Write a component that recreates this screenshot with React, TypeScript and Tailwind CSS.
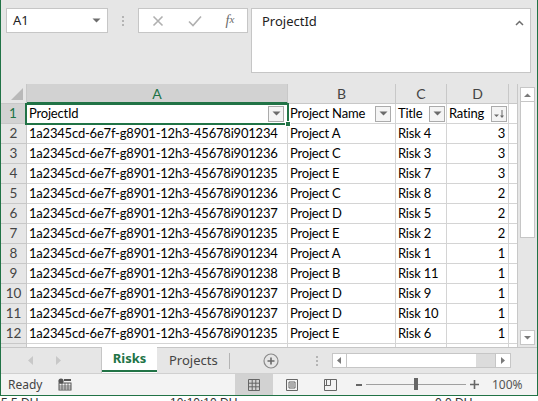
import React from "react";

const rows: [string, string, string, string][] = [
  ["1a2345cd-6e7f-g8901-12h3-45678i901234", "Project A", "Risk 4", "3"],
  ["1a2345cd-6e7f-g8901-12h3-45678i901236", "Project C", "Risk 3", "3"],
  ["1a2345cd-6e7f-g8901-12h3-45678i901235", "Project E", "Risk 7", "3"],
  ["1a2345cd-6e7f-g8901-12h3-45678i901236", "Project C", "Risk 8", "2"],
  ["1a2345cd-6e7f-g8901-12h3-45678i901237", "Project D", "Risk 5", "2"],
  ["1a2345cd-6e7f-g8901-12h3-45678i901235", "Project E", "Risk 2", "2"],
  ["1a2345cd-6e7f-g8901-12h3-45678i901234", "Project A", "Risk 1", "1"],
  ["1a2345cd-6e7f-g8901-12h3-45678i901238", "Project B", "Risk 11", "1"],
  ["1a2345cd-6e7f-g8901-12h3-45678i901237", "Project D", "Risk 9", "1"],
  ["1a2345cd-6e7f-g8901-12h3-45678i901237", "Project D", "Risk 10", "1"],
  ["1a2345cd-6e7f-g8901-12h3-45678i901235", "Project E", "Risk 6", "1"],
];

const cellFont = "font-['Lato','Liberation_Sans',sans-serif]";
const uiFont = "font-['Noto_Sans','Liberation_Sans',sans-serif]";

function FilterBtn({ sort = false }: { sort?: boolean }) {
  return (
    <div className="w-[16px] h-[16px] border border-[#ababab] bg-[#f4f4f4] flex items-center justify-center shrink-0">
      {sort ? (
        <svg width="12" height="10" viewBox="0 0 12 10">
          <path d="M1 5.5h5l-2.5 2.5z" fill="#6b6b6b" />
          <rect x="8.5" y="1" width="1" height="7" fill="#6b6b6b" />
          <path d="M7 6.5h4l-2 2.5z" fill="#6b6b6b" />
        </svg>
      ) : (
        <svg width="9" height="5" viewBox="0 0 9 5">
          <path d="M0.5 0.5h8l-4 4z" fill="#6b6b6b" />
        </svg>
      )}
    </div>
  );
}

function HeaderCell({ w, children, sel = false, last = false }: { w: string; children?: React.ReactNode; sel?: boolean; last?: boolean }) {
  return (
    <div
      className={`${w} h-full flex items-center justify-center shrink-0 ${last ? "" : "border-r border-[#c8c8c8]"} ${
        sel ? "bg-[#d2d2d2] text-[#217346] border-b-2 border-b-[#217346]" : "text-[#444] border-b border-b-[#c8c8c8]"
      }`}
    >
      {children}
    </div>
  );
}

export default function App() {
  return (
    <div className="w-[538px] h-[401px] overflow-hidden bg-white flex flex-col">
      <div className="h-[396px] shrink-0 flex flex-col border-l border-r border-b border-[#217346] bg-[#e6e6e6] relative">
        {/* Top formula area */}
        <div className={`h-[84px] shrink-0 flex items-start pt-[8px] pl-[5px] ${uiFont}`}>
          <div className="w-[102px] h-[25px] bg-white border border-[#c6c6c6] flex items-center pl-[6px] pr-[6px] text-[13px] text-[#222]">
            <span className="flex-1">A1</span>
            <svg width="9" height="5" viewBox="0 0 9 5">
              <path d="M0.5 0.5h8l-4 4z" fill="#6d6d6d" />
            </svg>
          </div>
          <div className="w-[30px] h-[25px] flex flex-col items-center justify-center gap-[2px]">
            <div className="w-[2px] h-[2px] bg-[#b4b4b4]" />
            <div className="w-[2px] h-[2px] bg-[#b4b4b4]" />
            <div className="w-[2px] h-[2px] bg-[#b4b4b4]" />
          </div>
          <div className="w-[110px] h-[25px] bg-white border border-[#c6c6c6] flex items-center">
            <div className="w-[38px] flex justify-center">
              <svg width="12" height="12" viewBox="0 0 12 12">
                <path d="M1.5 1.5l9 9M10.5 1.5l-9 9" stroke="#b0b0b0" strokeWidth="1.6" />
              </svg>
            </div>
            <div className="w-[36px] flex justify-center">
              <svg width="14" height="12" viewBox="0 0 14 12">
                <path d="M1 6.5l4 4 8-9" stroke="#b0b0b0" strokeWidth="1.6" fill="none" />
              </svg>
            </div>
            <div className="w-[34px] flex justify-center font-['Liberation_Serif',serif] italic text-[14px] text-[#6a6a6a] leading-none">
              f<span className="text-[11px]">x</span>
            </div>
          </div>
          <div className="ml-[3px] w-[280px] h-[65px] bg-white border border-[#c6c6c6] flex items-start justify-between pl-[10px] pr-[6px] pt-[2px]">
            <span className="text-[13px] text-[#222] leading-[20px]">ProjectId</span>
            <svg width="9" height="6" viewBox="0 0 9 6" className="mt-[9px]">
              <path d="M1 5l3.5-3.5L8 5" stroke="#6d6d6d" strokeWidth="1.5" fill="none" />
            </svg>
          </div>
        </div>

        {/* Grid area */}
        <div className={`h-[263px] shrink-0 flex overflow-hidden ${cellFont}`}>
          <div className="flex-1 flex flex-col overflow-hidden">
            {/* Column header */}
            <div className="h-[20px] shrink-0 flex bg-[#e6e6e6] text-[14px]">
              <div className="w-[26px] h-full shrink-0 border-r border-b border-[#c8c8c8] flex items-end justify-end pr-[3px] pb-[3px]">
                <svg width="12" height="12" viewBox="0 0 12 12">
                  <path d="M12 0v12H0z" fill="#b9b9b9" />
                </svg>
              </div>
              <HeaderCell w="w-[261px]" sel>A</HeaderCell>
              <HeaderCell w="w-[108px]">B</HeaderCell>
              <HeaderCell w="w-[51px]">C</HeaderCell>
              <HeaderCell w="w-[62px]">D</HeaderCell>
              <HeaderCell w="w-[8px]" last />
            </div>
            {/* Row 1 */}
            <div className="h-[20px] shrink-0 flex text-[13px] tracking-[-0.2px] text-black bg-white relative">
              <div className="w-[26px] h-full shrink-0 bg-[#d2d2d2] border-r-2 border-r-[#217346] border-b border-b-[#c8c8c8] flex items-center justify-center text-[#217346] text-[13.5px] tracking-normal">
                1
              </div>
              <div className="w-[261px] h-full shrink-0 border-r border-b border-[#d4d4d4] flex items-center pl-[2px] pr-[3px]">
                <span className="flex-1">ProjectId</span>
                <FilterBtn />
              </div>
              <div className="w-[108px] h-full shrink-0 border-r border-b border-[#d4d4d4] flex items-center pl-[2px] pr-[4px]">
                <span className="flex-1 whitespace-nowrap">Project Name</span>
                <FilterBtn />
              </div>
              <div className="w-[51px] h-full shrink-0 border-r border-b border-[#d4d4d4] flex items-center pl-[2px] pr-[1px]">
                <span className="flex-1">Title</span>
                <FilterBtn />
              </div>
              <div className="w-[62px] h-full shrink-0 border-r border-b border-[#d4d4d4] flex items-center pl-[2px] pr-[1px]">
                <span className="flex-1">Rating</span>
                <FilterBtn sort />
              </div>
              <div className="w-[8px] h-full shrink-0 border-b border-[#d4d4d4]" />
              {/* selection */}
              <div className="absolute left-[24px] top-[-1px] w-[264px] h-[22px] border-2 border-[#217346] pointer-events-none" />
              <div className="absolute left-[284px] top-[17px] w-[6px] h-[6px] bg-[#217346] border border-white pointer-events-none" />
            </div>
            {rows.map((r, i) => (
              <div key={i} className="h-[20px] shrink-0 flex text-[13px] tracking-[-0.2px] text-black bg-white">
                <div className="w-[26px] h-full shrink-0 bg-[#e6e6e6] border-r border-b border-[#c8c8c8] flex items-center justify-center text-[#444] text-[13.5px] tracking-normal">
                  {i + 2}
                </div>
                <div className="w-[261px] h-full shrink-0 border-r border-b border-[#d4d4d4] flex items-center pl-[2px] whitespace-nowrap overflow-hidden">
                  {r[0]}
                </div>
                <div className="w-[108px] h-full shrink-0 border-r border-b border-[#d4d4d4] flex items-center pl-[2px] whitespace-nowrap">
                  {r[1]}
                </div>
                <div className="w-[51px] h-full shrink-0 border-r border-b border-[#d4d4d4] flex items-center pl-[2px] whitespace-nowrap">
                  {r[2]}
                </div>
                <div className="w-[62px] h-full shrink-0 border-r border-b border-[#d4d4d4] flex items-center justify-end pr-[3px]">
                  {r[3]}
                </div>
                <div className="w-[8px] h-full shrink-0 border-b border-[#d4d4d4]" />
              </div>
            ))}
            <div className="h-[3px] shrink-0 flex">
              <div className="w-[26px] h-full shrink-0 bg-[#e6e6e6] border-r border-[#c8c8c8]" />
              <div className="w-[261px] h-full shrink-0 border-r border-[#d4d4d4] bg-white" />
              <div className="w-[108px] h-full shrink-0 border-r border-[#d4d4d4] bg-white" />
              <div className="w-[51px] h-full shrink-0 border-r border-[#d4d4d4] bg-white" />
              <div className="w-[62px] h-full shrink-0 border-r border-[#d4d4d4] bg-white" />
              <div className="w-[8px] h-full shrink-0 bg-white" />
            </div>
          </div>
          {/* Vertical scrollbar */}
          <div className="w-[20px] shrink-0 border-l border-[#c8c8c8] bg-[#e6e6e6] flex flex-col items-center pt-[3px] pb-[2px]">
            <div className="w-[15px] h-[15px] bg-white border border-[#c6c6c6] flex items-center justify-center">
              <svg width="7" height="4" viewBox="0 0 7 4">
                <path d="M0 4l3.5-3.5L7 4z" fill="#7a7a7a" />
              </svg>
            </div>
            <div className="w-[15px] h-[136px] bg-white border border-[#c6c6c6] border-t-0" />
            <div className="flex-1" />
            <div className="w-[15px] h-[15px] bg-white border border-[#c6c6c6] flex items-center justify-center">
              <svg width="7" height="4" viewBox="0 0 7 4">
                <path d="M0 0h7L3.5 3.5z" fill="#7a7a7a" />
              </svg>
            </div>
          </div>
        </div>

        {/* Tab bar */}
        <div className={`h-[26px] shrink-0 flex items-stretch bg-[#e6e6e6] ${uiFont}`}>
          <div className="w-[100px] border-t border-[#c6c6c6] flex items-center">
            <svg width="6" height="9" viewBox="0 0 6 9" className="ml-[27px]">
              <path d="M5 0v9L0 4.5z" fill="#c8c8c8" />
            </svg>
            <svg width="6" height="9" viewBox="0 0 6 9" className="ml-[22px]">
              <path d="M0 0v9l5-4.5z" fill="#c8c8c8" />
            </svg>
          </div>
          <div className="w-[56px] bg-white border-l border-[#c6c6c6] flex flex-col">
            <div className="flex-1 flex items-center justify-center text-[#217346] font-bold text-[13px]">Risks</div>
            <div className="h-[2px] bg-[#217346] mb-[1px]" />
          </div>
          <div className="flex-1 border-t border-[#c6c6c6] flex items-center">
            <span className="ml-[12px] text-[13px] text-[#444]">Projects</span>
            <div className="ml-[11px] w-[1px] h-[16px] bg-[#b4b4b4]" />
            <svg width="16" height="16" viewBox="0 0 16 16" className="ml-[33px]">
              <circle cx="8" cy="8" r="7" fill="none" stroke="#8a8a8a" strokeWidth="1.2" />
              <path d="M8 4.5v7M4.5 8h7" stroke="#6a6a6a" strokeWidth="1.6" />
            </svg>
            <div className="ml-[37px] flex flex-col gap-[2px]">
              <div className="w-[2px] h-[2px] bg-[#b4b4b4]" />
              <div className="w-[2px] h-[2px] bg-[#b4b4b4]" />
              <div className="w-[2px] h-[2px] bg-[#b4b4b4]" />
            </div>
            <div className="ml-[14px] w-[179px] h-[15px] border border-[#c6c6c6] bg-[#dcdcdc] flex">
              <div className="w-[14px] h-full bg-white border-r border-[#c6c6c6] flex items-center justify-center">
                <svg width="4" height="7" viewBox="0 0 4 7">
                  <path d="M4 0v7L0 3.5z" fill="#7a7a7a" />
                </svg>
              </div>
              <div className="w-[129px] h-full bg-white" />
              <div className="flex-1" />
              <div className="w-[15px] h-full bg-white border-l border-[#c6c6c6] flex items-center justify-center">
                <svg width="4" height="7" viewBox="0 0 4 7">
                  <path d="M0 0v7l4-3.5z" fill="#7a7a7a" />
                </svg>
              </div>
            </div>
          </div>
        </div>

        {/* Status bar */}
        <div className={`h-[22px] shrink-0 flex items-stretch bg-[#f3f3f3] border-t border-[#d0d0d0] text-[12px] text-[#444] ${uiFont}`}>
          <span className="ml-[7px] self-center">Ready</span>
          <svg width="14" height="13" viewBox="0 0 14 13" className="ml-[16px] self-center">
            <circle cx="3" cy="3" r="2.6" fill="#555" />
            <rect x="6" y="1" width="7" height="2" fill="#555" />
            <rect x="1" y="5" width="12" height="7" fill="none" stroke="#555" />
            <path d="M1 8h12M1 10h12M4 5v7M7 5v7M10 5v7" stroke="#555" strokeWidth="0.8" />
          </svg>
          <div className="flex-1" />
          <div className="w-[38px] bg-[#d2d2d2] flex items-center justify-center">
            <svg width="12" height="12" viewBox="0 0 12 12">
              <path d="M0.5 0.5h11v11h-11zM0.5 4.2h11M0.5 7.8h11M4.2 0.5v11M7.8 0.5v11" stroke="#666" fill="none" />
            </svg>
          </div>
          <div className="w-[38px] flex items-center justify-center">
            <svg width="12" height="12" viewBox="0 0 12 12">
              <path d="M0.5 0.5h11v11h-11z" stroke="#666" fill="none" />
              <path d="M3 3h6v6H3z" stroke="#666" fill="none" />
              <path d="M4 5h4M4 7h4" stroke="#666" />
            </svg>
          </div>
          <div className="w-[38px] flex items-center justify-center">
            <svg width="13" height="12" viewBox="0 0 13 12">
              <path d="M0.5 0.5h12v11h-12zM6.5 0.5v6M0.5 6.5h6" stroke="#666" fill="none" />
              <path d="M2.5 0.5v6" stroke="#666" />
            </svg>
          </div>
          <div className="w-[143px] flex items-center pl-[7px]">
            <div className="w-[6px] h-[2px] bg-[#666]" />
            <div className="ml-[4px] w-[100px] h-[1px] bg-[#a0a0a0] relative">
              <div className="absolute left-[48px] top-[-6px] w-[4px] h-[12px] bg-[#666]" />
            </div>
            <svg width="9" height="9" viewBox="0 0 9 9" className="ml-[4px]">
              <path d="M4.5 0v9M0 4.5h9" stroke="#666" strokeWidth="1.6" />
            </svg>
          </div>
          <span className="w-[45px] self-center text-[#555]">100%</span>
        </div>
      </div>
      {/* window below (cut off) */}
      <div className="h-[5px] shrink-0 overflow-hidden bg-white relative font-['Liberation_Sans',sans-serif] text-[12px] text-[#333] leading-none">
        <span className="absolute left-[1px] top-[1px]">5 5 DU</span>
        <span className="absolute left-[170px] top-[1px]">10:10:10 DU</span>
        <span className="absolute left-[435px] top-[1px]">0 0 DU</span>
      </div>
    </div>
  );
}
